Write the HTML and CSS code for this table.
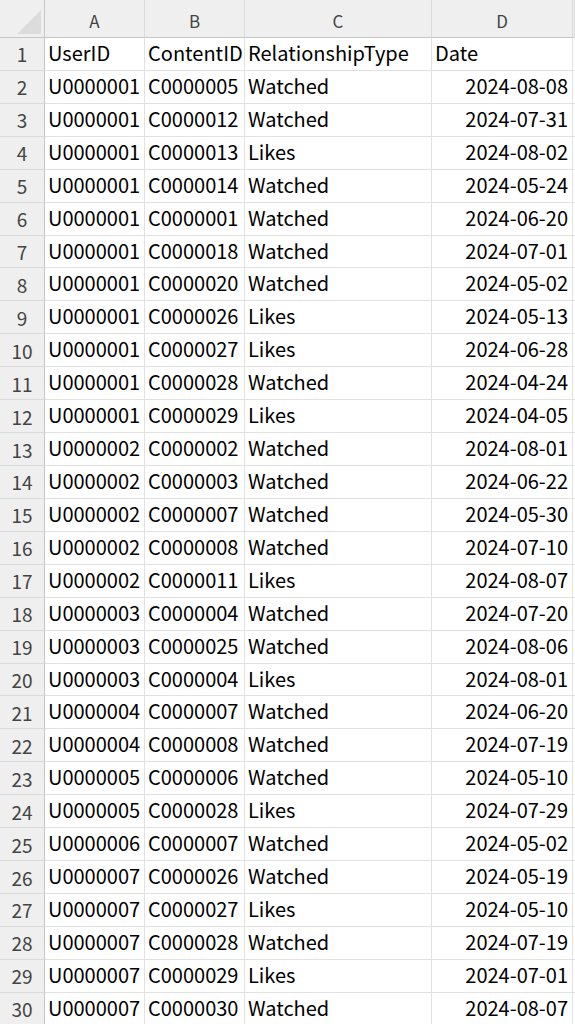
FILE: index.html
```html
<!DOCTYPE html>
<html>
<head>
<meta charset="utf-8">
<link rel="stylesheet" href="styles.css">
</head>
<body>
<div class="sheet">
  <div class="row head">
    <div class="corner"><span class="tri"></span></div>
    <div class="colh">A</div><div class="colh">B</div><div class="colh">C</div><div class="colh">D</div><div class="colh"></div>
  </div>
  <div class="row"><div class="rh">1</div><div class="c">UserID</div><div class="c">ContentID</div><div class="c">RelationshipType</div><div class="c">Date</div><div class="c"></div></div>
  <div class="row"><div class="rh">2</div><div class="c">U0000001</div><div class="c">C0000005</div><div class="c">Watched</div><div class="c r">2024-08-08</div><div class="c"></div></div>
  <div class="row"><div class="rh">3</div><div class="c">U0000001</div><div class="c">C0000012</div><div class="c">Watched</div><div class="c r">2024-07-31</div><div class="c"></div></div>
  <div class="row"><div class="rh">4</div><div class="c">U0000001</div><div class="c">C0000013</div><div class="c">Likes</div><div class="c r">2024-08-02</div><div class="c"></div></div>
  <div class="row"><div class="rh">5</div><div class="c">U0000001</div><div class="c">C0000014</div><div class="c">Watched</div><div class="c r">2024-05-24</div><div class="c"></div></div>
  <div class="row"><div class="rh">6</div><div class="c">U0000001</div><div class="c">C0000001</div><div class="c">Watched</div><div class="c r">2024-06-20</div><div class="c"></div></div>
  <div class="row"><div class="rh">7</div><div class="c">U0000001</div><div class="c">C0000018</div><div class="c">Watched</div><div class="c r">2024-07-01</div><div class="c"></div></div>
  <div class="row"><div class="rh">8</div><div class="c">U0000001</div><div class="c">C0000020</div><div class="c">Watched</div><div class="c r">2024-05-02</div><div class="c"></div></div>
  <div class="row"><div class="rh">9</div><div class="c">U0000001</div><div class="c">C0000026</div><div class="c">Likes</div><div class="c r">2024-05-13</div><div class="c"></div></div>
  <div class="row"><div class="rh">10</div><div class="c">U0000001</div><div class="c">C0000027</div><div class="c">Likes</div><div class="c r">2024-06-28</div><div class="c"></div></div>
  <div class="row"><div class="rh">11</div><div class="c">U0000001</div><div class="c">C0000028</div><div class="c">Watched</div><div class="c r">2024-04-24</div><div class="c"></div></div>
  <div class="row"><div class="rh">12</div><div class="c">U0000001</div><div class="c">C0000029</div><div class="c">Likes</div><div class="c r">2024-04-05</div><div class="c"></div></div>
  <div class="row"><div class="rh">13</div><div class="c">U0000002</div><div class="c">C0000002</div><div class="c">Watched</div><div class="c r">2024-08-01</div><div class="c"></div></div>
  <div class="row"><div class="rh">14</div><div class="c">U0000002</div><div class="c">C0000003</div><div class="c">Watched</div><div class="c r">2024-06-22</div><div class="c"></div></div>
  <div class="row"><div class="rh">15</div><div class="c">U0000002</div><div class="c">C0000007</div><div class="c">Watched</div><div class="c r">2024-05-30</div><div class="c"></div></div>
  <div class="row"><div class="rh">16</div><div class="c">U0000002</div><div class="c">C0000008</div><div class="c">Watched</div><div class="c r">2024-07-10</div><div class="c"></div></div>
  <div class="row"><div class="rh">17</div><div class="c">U0000002</div><div class="c">C0000011</div><div class="c">Likes</div><div class="c r">2024-08-07</div><div class="c"></div></div>
  <div class="row"><div class="rh">18</div><div class="c">U0000003</div><div class="c">C0000004</div><div class="c">Watched</div><div class="c r">2024-07-20</div><div class="c"></div></div>
  <div class="row"><div class="rh">19</div><div class="c">U0000003</div><div class="c">C0000025</div><div class="c">Watched</div><div class="c r">2024-08-06</div><div class="c"></div></div>
  <div class="row"><div class="rh">20</div><div class="c">U0000003</div><div class="c">C0000004</div><div class="c">Likes</div><div class="c r">2024-08-01</div><div class="c"></div></div>
  <div class="row"><div class="rh">21</div><div class="c">U0000004</div><div class="c">C0000007</div><div class="c">Watched</div><div class="c r">2024-06-20</div><div class="c"></div></div>
  <div class="row"><div class="rh">22</div><div class="c">U0000004</div><div class="c">C0000008</div><div class="c">Watched</div><div class="c r">2024-07-19</div><div class="c"></div></div>
  <div class="row"><div class="rh">23</div><div class="c">U0000005</div><div class="c">C0000006</div><div class="c">Watched</div><div class="c r">2024-05-10</div><div class="c"></div></div>
  <div class="row"><div class="rh">24</div><div class="c">U0000005</div><div class="c">C0000028</div><div class="c">Likes</div><div class="c r">2024-07-29</div><div class="c"></div></div>
  <div class="row"><div class="rh">25</div><div class="c">U0000006</div><div class="c">C0000007</div><div class="c">Watched</div><div class="c r">2024-05-02</div><div class="c"></div></div>
  <div class="row"><div class="rh">26</div><div class="c">U0000007</div><div class="c">C0000026</div><div class="c">Watched</div><div class="c r">2024-05-19</div><div class="c"></div></div>
  <div class="row"><div class="rh">27</div><div class="c">U0000007</div><div class="c">C0000027</div><div class="c">Likes</div><div class="c r">2024-05-10</div><div class="c"></div></div>
  <div class="row"><div class="rh">28</div><div class="c">U0000007</div><div class="c">C0000028</div><div class="c">Watched</div><div class="c r">2024-07-19</div><div class="c"></div></div>
  <div class="row"><div class="rh">29</div><div class="c">U0000007</div><div class="c">C0000029</div><div class="c">Likes</div><div class="c r">2024-07-01</div><div class="c"></div></div>
  <div class="row"><div class="rh">30</div><div class="c">U0000007</div><div class="c">C0000030</div><div class="c">Watched</div><div class="c r">2024-08-07</div><div class="c"></div></div>
</div>
</body>
</html>
```

FILE: styles.css
```css
html, body {
  margin: 0;
  padding: 0;
  background: #ffffff;
  overflow: hidden;
}
.sheet {
  width: 575px;
  height: 1024px;
  overflow: hidden;
  font-family: "Noto Sans CJK TC", "Noto Sans", sans-serif;
  color: #000;
}
.row {
  display: grid;
  grid-template-columns: 45px 100px 100px 187px 141px 1fr;
  height: 32.93px;
  box-sizing: border-box;
}
.row.head {
  height: 38px;
  background: #efefef;
}
.corner {
  position: relative;
  border-right: 1px solid #c6c6c6;
  border-bottom: 1px solid #c6c6c6;
  box-sizing: border-box;
}
.tri {
  position: absolute;
  left: 17px;
  top: 10px;
  width: 24px;
  height: 24px;
  background: #dcdcdc;
  clip-path: polygon(100% 0, 100% 100%, 0 100%);
}
.colh {
  border-right: 1px solid #dadada;
  border-bottom: 1px solid #c6c6c6;
  box-sizing: border-box;
  text-align: center;
  font-size: 17px;
  line-height: 17px;
  padding-top: 12px;
  color: #444;
}
.rh {
  background: #efefef;
  border-right: 1px solid #c6c6c6;
  border-bottom: 1px solid #dadada;
  box-sizing: border-box;
  text-align: center;
  font-size: 19px;
  color: #444;
  display: flex;
  align-items: center;
  justify-content: center;
}
.c {
  border-right: 1px solid #e1e1e1;
  border-bottom: 1px solid #e1e1e1;
  box-sizing: border-box;
  font-size: 20px;
  line-height: 30px;
  padding: 0 4px 0 3px;
  white-space: nowrap;
  overflow: hidden;
}
.c.r {
  text-align: right;
}
```
